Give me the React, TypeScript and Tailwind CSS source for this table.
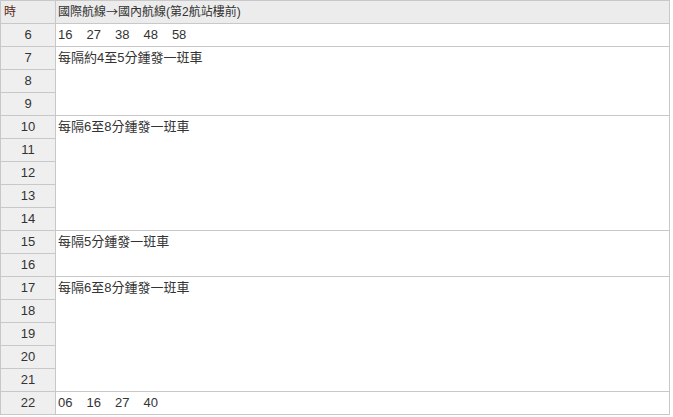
const font = {
  fontFamily: '"Liberation Sans", "Noto Sans CJK TC", sans-serif',
};

type Group = { hours: number[]; times?: string[]; note?: string };

const groups: Group[] = [
  { hours: [6], times: ["16", "27", "38", "48", "58"] },
  { hours: [7, 8, 9], note: "每隔約4至5分鍾發一班車" },
  { hours: [10, 11, 12, 13, 14], note: "每隔6至8分鍾發一班車" },
  { hours: [15, 16], note: "每隔5分鍾發一班車" },
  { hours: [17, 18, 19, 20, 21], note: "每隔6至8分鍾發一班車" },
  { hours: [22], times: ["06", "16", "27", "40"] },
];

function Content({ g }: { g: Group }) {
  if (g.times) {
    return (
      <div className="flex gap-[14px]">
        {g.times.map((t) => (
          <span key={t}>{t}</span>
        ))}
      </div>
    );
  }
  return <span>{g.note}</span>;
}

export default function App() {
  return (
    <div className="bg-white w-[673px] h-[417px] text-[#333]" style={font}>
      <table className="border-collapse w-[670px] text-[12px] leading-[22px]">
        <thead>
          <tr className="h-[23px] bg-[#ececec]">
            <th className="w-[55px] border border-[#c8c8c8] text-left font-normal px-[3px] align-top text-[#5a2a20]">
              時
            </th>
            <th className="border border-[#c8c8c8] text-left font-normal pl-[2px] pr-[3px] align-top">
              <div className="flex h-[22px] items-center">
                <span>國際航線</span>
                <span style={{ fontFamily: '"Noto Sans CJK TC", sans-serif' }}>→</span>
                <span>國內航線(第2航站樓前)</span>
              </div>
            </th>
          </tr>
        </thead>
        <tbody>
          {groups.map((g) =>
            g.hours.map((h, i) => (
              <tr key={h} className="h-[23px]">
                <td className="border border-[#c8c8c8] bg-[#efefef] text-center text-[13px] align-top">
                  {h}
                </td>
                {i === 0 && (
                  <td
                    rowSpan={g.hours.length}
                    className="border border-[#c8c8c8] pl-[2px] pr-[3px] align-top text-[13px]"
                  >
                    <Content g={g} />
                  </td>
                )}
              </tr>
            ))
          )}
        </tbody>
      </table>
    </div>
  );
}
